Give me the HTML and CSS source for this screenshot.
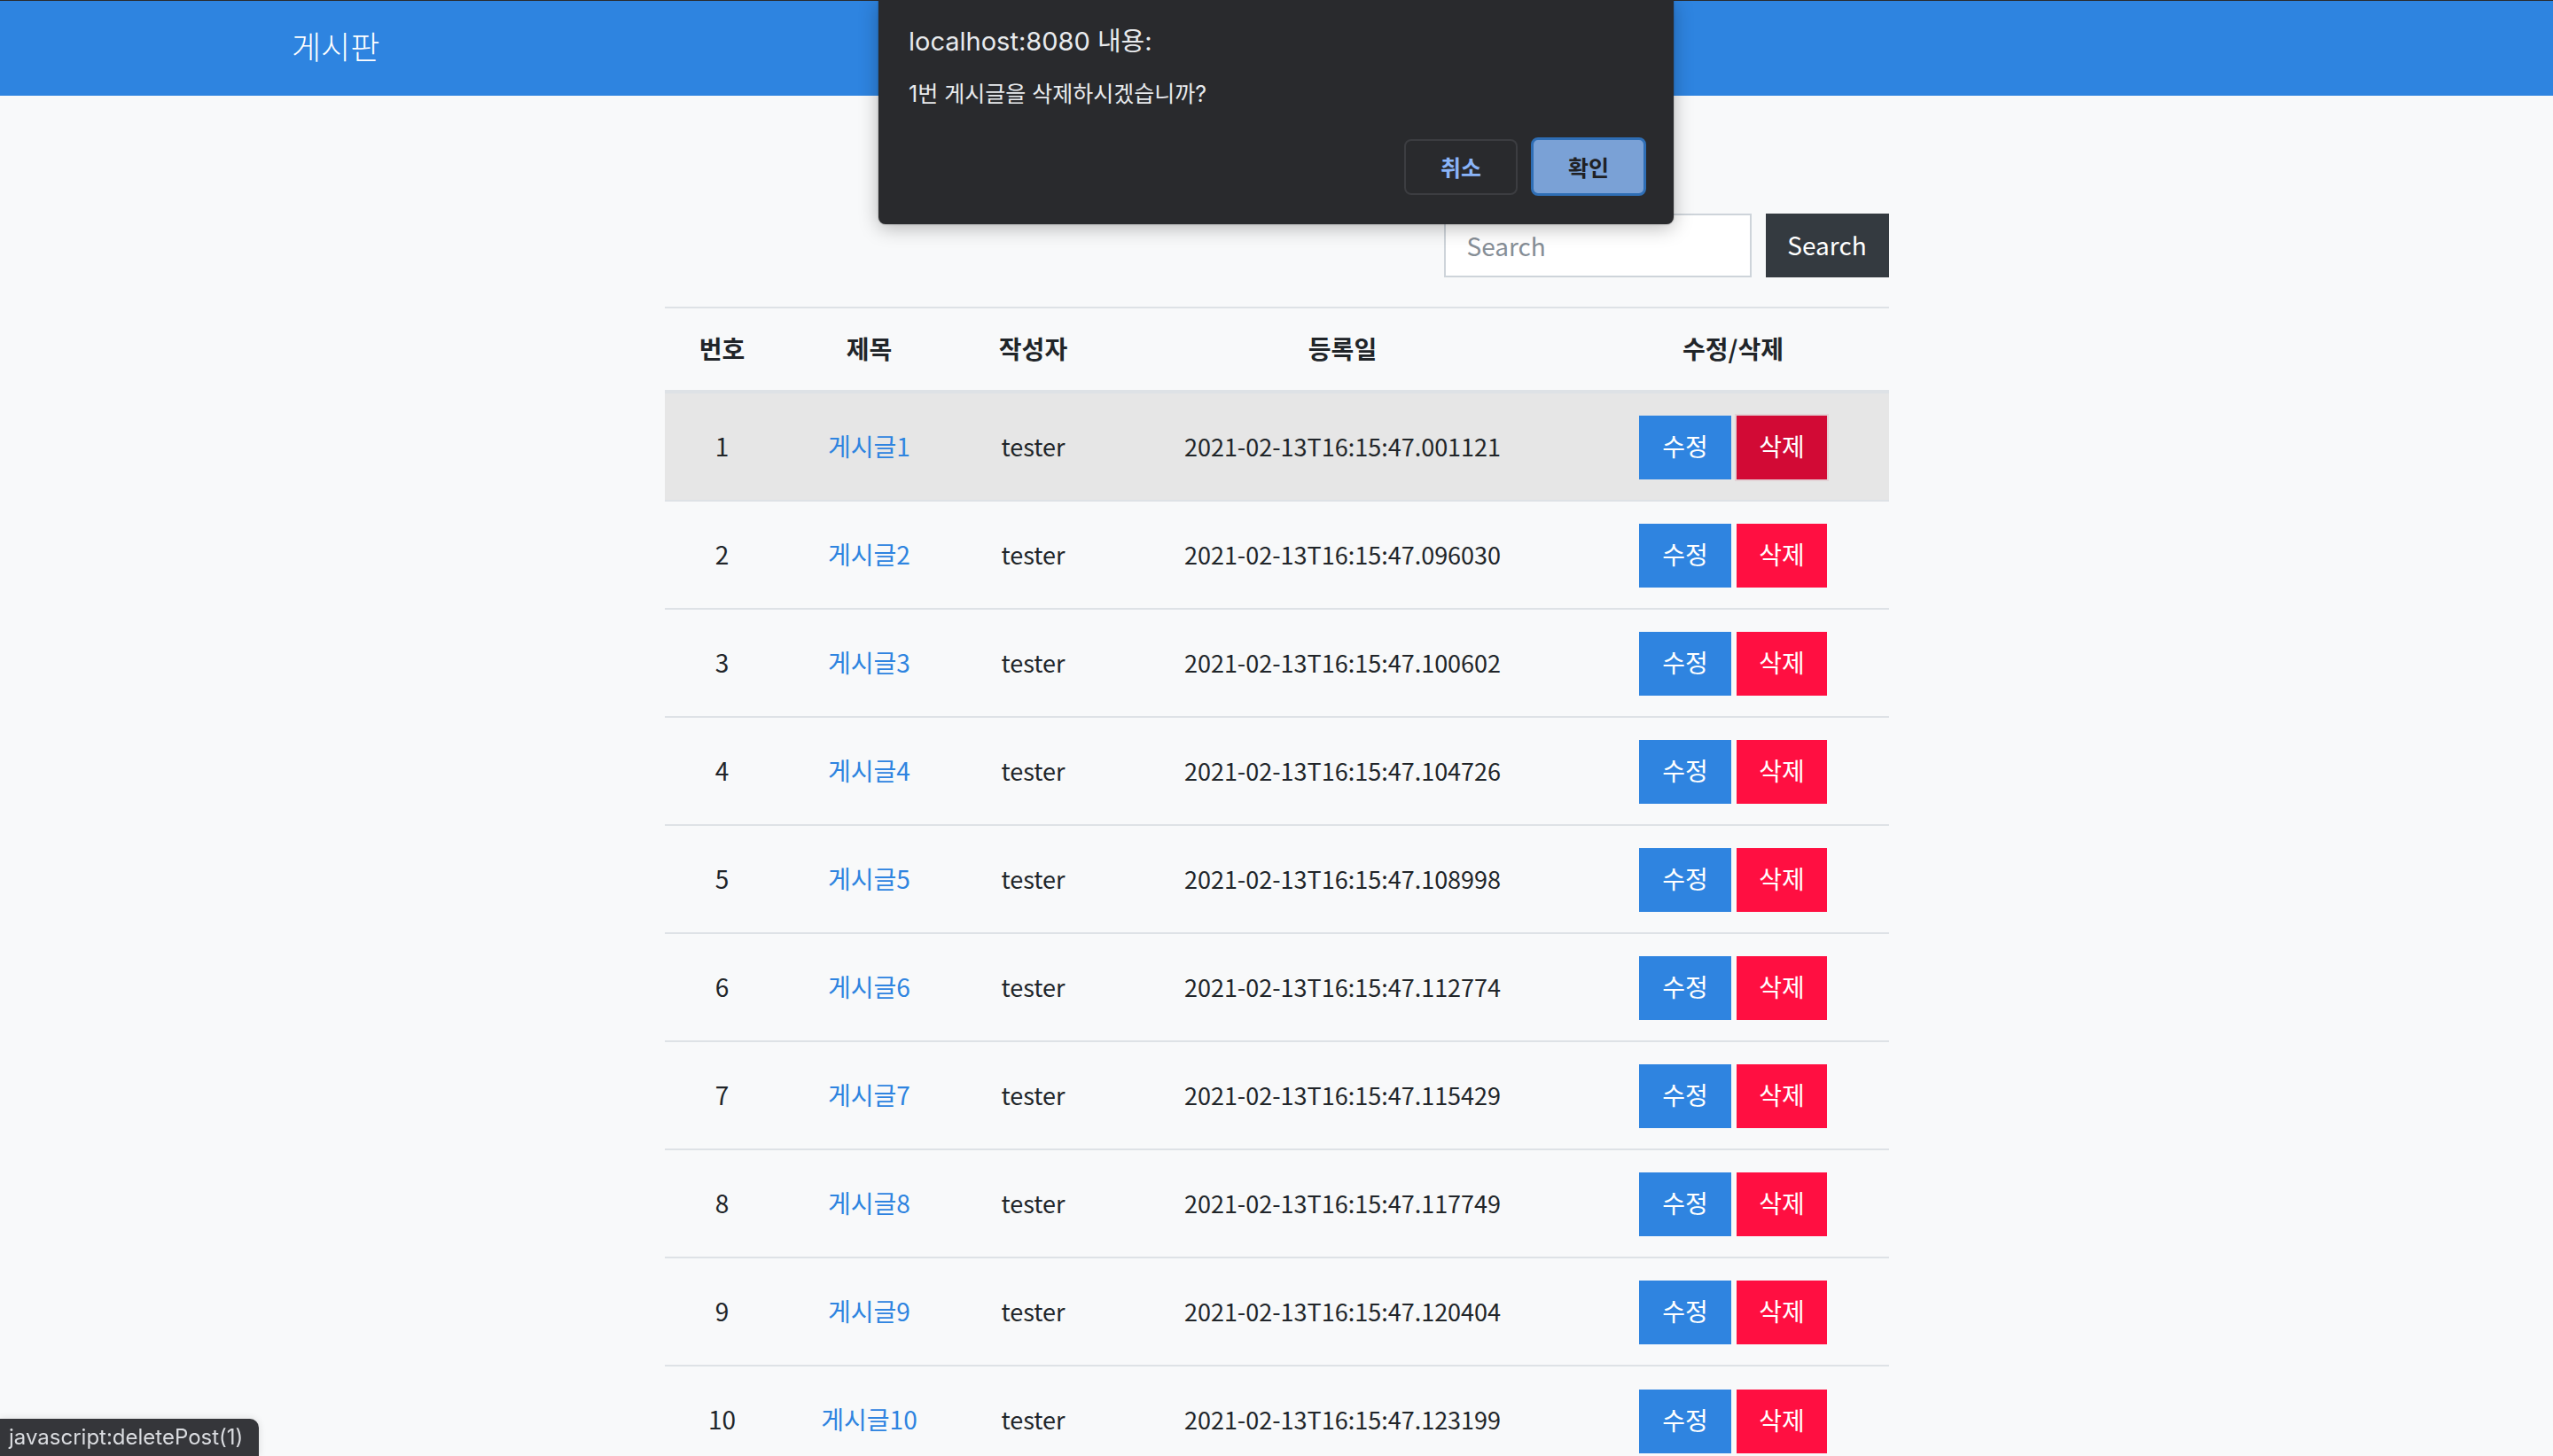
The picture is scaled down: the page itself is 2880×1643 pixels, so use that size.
FILE: index.html
```html
<!DOCTYPE html>
<html lang="ko">
<head>
<meta charset="utf-8">
<title>게시판</title>
<link rel="stylesheet" href="styles.css">
</head>
<body>
<nav class="navbar">
  <a class="brand" href="#">게시판</a>
</nav>

<main class="container">
  <form class="search-form">
    <input class="search-input" type="text" placeholder="Search">
    <button class="search-btn" type="button">Search</button>
  </form>

  <table class="board">
    <colgroup>
      <col class="c-no"><col class="c-title"><col class="c-writer"><col class="c-date"><col class="c-act">
    </colgroup>
    <thead>
      <tr><th>번호</th><th>제목</th><th>작성자</th><th>등록일</th><th>수정/삭제</th></tr>
    </thead>
    <tbody>
      <tr class="hover"><td>1</td><td><a class="link" href="#">게시글1</a></td><td class="meta">tester</td><td class="meta">2021-02-13T16:15:47.001121</td><td><div class="acts"><a class="btn btn-edit" href="#">수정</a><a class="btn btn-del active" href="#">삭제</a></div></td></tr>
      <tr><td>2</td><td><a class="link" href="#">게시글2</a></td><td class="meta">tester</td><td class="meta">2021-02-13T16:15:47.096030</td><td><div class="acts"><a class="btn btn-edit" href="#">수정</a><a class="btn btn-del" href="#">삭제</a></div></td></tr>
      <tr><td>3</td><td><a class="link" href="#">게시글3</a></td><td class="meta">tester</td><td class="meta">2021-02-13T16:15:47.100602</td><td><div class="acts"><a class="btn btn-edit" href="#">수정</a><a class="btn btn-del" href="#">삭제</a></div></td></tr>
      <tr><td>4</td><td><a class="link" href="#">게시글4</a></td><td class="meta">tester</td><td class="meta">2021-02-13T16:15:47.104726</td><td><div class="acts"><a class="btn btn-edit" href="#">수정</a><a class="btn btn-del" href="#">삭제</a></div></td></tr>
      <tr><td>5</td><td><a class="link" href="#">게시글5</a></td><td class="meta">tester</td><td class="meta">2021-02-13T16:15:47.108998</td><td><div class="acts"><a class="btn btn-edit" href="#">수정</a><a class="btn btn-del" href="#">삭제</a></div></td></tr>
      <tr><td>6</td><td><a class="link" href="#">게시글6</a></td><td class="meta">tester</td><td class="meta">2021-02-13T16:15:47.112774</td><td><div class="acts"><a class="btn btn-edit" href="#">수정</a><a class="btn btn-del" href="#">삭제</a></div></td></tr>
      <tr><td>7</td><td><a class="link" href="#">게시글7</a></td><td class="meta">tester</td><td class="meta">2021-02-13T16:15:47.115429</td><td><div class="acts"><a class="btn btn-edit" href="#">수정</a><a class="btn btn-del" href="#">삭제</a></div></td></tr>
      <tr><td>8</td><td><a class="link" href="#">게시글8</a></td><td class="meta">tester</td><td class="meta">2021-02-13T16:15:47.117749</td><td><div class="acts"><a class="btn btn-edit" href="#">수정</a><a class="btn btn-del" href="#">삭제</a></div></td></tr>
      <tr><td>9</td><td><a class="link" href="#">게시글9</a></td><td class="meta">tester</td><td class="meta">2021-02-13T16:15:47.120404</td><td><div class="acts"><a class="btn btn-edit" href="#">수정</a><a class="btn btn-del" href="#">삭제</a></div></td></tr>
      <tr><td>10</td><td><a class="link" href="#">게시글10</a></td><td class="meta">tester</td><td class="meta">2021-02-13T16:15:47.123199</td><td><div class="acts"><a class="btn btn-edit" href="#">수정</a><a class="btn btn-del" href="#">삭제</a></div></td></tr>
    </tbody>
  </table>
</main>

<div class="dialog" role="dialog">
  <div class="dlg-title">localhost:8080 내용:</div>
  <div class="dlg-msg">1번 게시글을 삭제하시겠습니까?</div>
  <div class="dlg-btns">
    <button class="dlg-btn dlg-cancel" type="button">취소</button>
    <button class="dlg-btn dlg-ok" type="button">확인</button>
  </div>
</div>

<div class="statusbar">javascript:deletePost(1)</div>
</body>
</html>
```

FILE: styles.css
```css
* { box-sizing: border-box; }
html, body { margin: 0; padding: 0; }
body {
  background: #f8f9fa;
  color: #212529;
  font-family: "Noto Sans CJK KR", "Noto Sans", sans-serif;
  font-size: 28px;
  line-height: 1.5;
  height: 1643px;
  overflow: hidden;
  font-feature-settings: "calt" 0, "locl" 0;
}

.navbar {
  height: 108px;
  background: #2e84e0;
  border-top: 1px solid #2a2b2e;
  display: flex;
  align-items: center;
  padding-left: 329px;
}
.brand {
  color: #fff;
  text-decoration: none;
  font-size: 36px;
  font-weight: 300;
  line-height: 1;
  padding-bottom: 8px;
}

.container {
  width: 1381px;
  margin: 0 auto;
}

.search-form {
  display: flex;
  justify-content: flex-end;
  gap: 16px;
  margin: 133px 0 33px;
}
.search-input {
  width: 347px;
  height: 72px;
  border: 2px solid #ced4da;
  background: #fff;
  padding: 0 24px;
  font-family: inherit;
  font-size: 28px;
  color: #495057;
  outline: none;
}
.search-input::placeholder { color: #868e96; }
.search-btn {
  width: 139px;
  height: 72px;
  border: 0;
  background: #343a40;
  color: #fff;
  font-family: inherit;
  font-size: 28px;
  padding: 0 0 2px;
}

.board {
  width: 1381px;
  border-collapse: collapse;
  table-layout: fixed;
}
.c-no { width: 130px; }
.c-title { width: 202px; }
.c-writer { width: 168px; }
.c-date { width: 530px; }
.c-act { width: 351px; }

.board th, .board td {
  text-align: center;
  vertical-align: middle;
  padding: 24px 0;
  border-top: 2px solid #dee2e6;
  line-height: 45px;
  white-space: nowrap;
}
.board th {
  font-weight: 700;
  border-bottom: 4px solid #dee2e6;
  color: #212529;
  padding: 23px 0 24px;
}
.board td { height: 122px; padding: 23px 0 25px; }
.board td .acts { margin-top: 2px; margin-bottom: -2px; }
.board td.meta { font-size: 27px; }
.board tr.hover td { background: #e6e6e6; }

.link { color: #2e84e0; text-decoration: none; }

.acts {
  display: flex;
  justify-content: center;
  gap: 6px;
}
.btn {
  display: inline-flex;
  align-items: center;
  justify-content: center;
  height: 72px;
  color: #fff;
  text-decoration: none;
  line-height: 1;
  padding-bottom: 4px;
}
.btn-edit { width: 104px; background: #2f84e0; }
.btn-del { width: 102px; background: #ff0f41; }
.btn-del.active {
  background: #d20a35;
  box-shadow: 0 0 0 2px rgba(225, 205, 210, 0.8);
}

.dialog {
  position: absolute;
  top: 0;
  left: 991px;
  width: 897px;
  height: 253px;
  background: #292a2d;
  border-radius: 0 0 8px 8px;
  box-shadow: 0 4px 22px rgba(0, 0, 0, 0.28), 0 0 2px rgba(0, 0, 0, 0.4);
  padding: 27px 31px 0 34px;
  font-family: Inter, "Noto Sans CJK KR", sans-serif;
  font-feature-settings: normal;
  color: #e8eaed;
  display: flex;
  flex-direction: column;
}
.dlg-title {
  font-size: 29px;
  line-height: 40px;
}
.dlg-msg {
  font-size: 25px;
  line-height: 34px;
  margin-top: 22px;
}
.dlg-btns {
  display: flex;
  justify-content: flex-end;
  align-items: center;
  gap: 15px;
  margin-top: 32px;
}
.dlg-btn {
  font-family: "Noto Sans CJK KR", sans-serif;
  font-size: 25px;
  font-weight: 700;
  border-radius: 8px;
  padding: 0;
}
.dlg-cancel {
  width: 128px;
  height: 63px;
  background: transparent;
  border: 2px solid #3c3d41;
  color: #8ab4f8;
}
.dlg-ok {
  width: 130px;
  height: 66px;
  background: #7aa1d6;
  border: 3px solid #2f6eb5;
  color: #202124;
}

.statusbar {
  position: fixed;
  left: 0;
  bottom: 0;
  width: 292px;
  height: 42px;
  background: #35363a;
  color: #dadce0;
  border-top-right-radius: 10px;
  box-shadow: 0 0 8px rgba(0, 0, 0, 0.12);
  font-family: Inter, "Noto Sans", sans-serif;
  font-feature-settings: normal;
  font-size: 24px;
  line-height: 42px;
  padding-left: 10px;
  white-space: nowrap;
}
```
